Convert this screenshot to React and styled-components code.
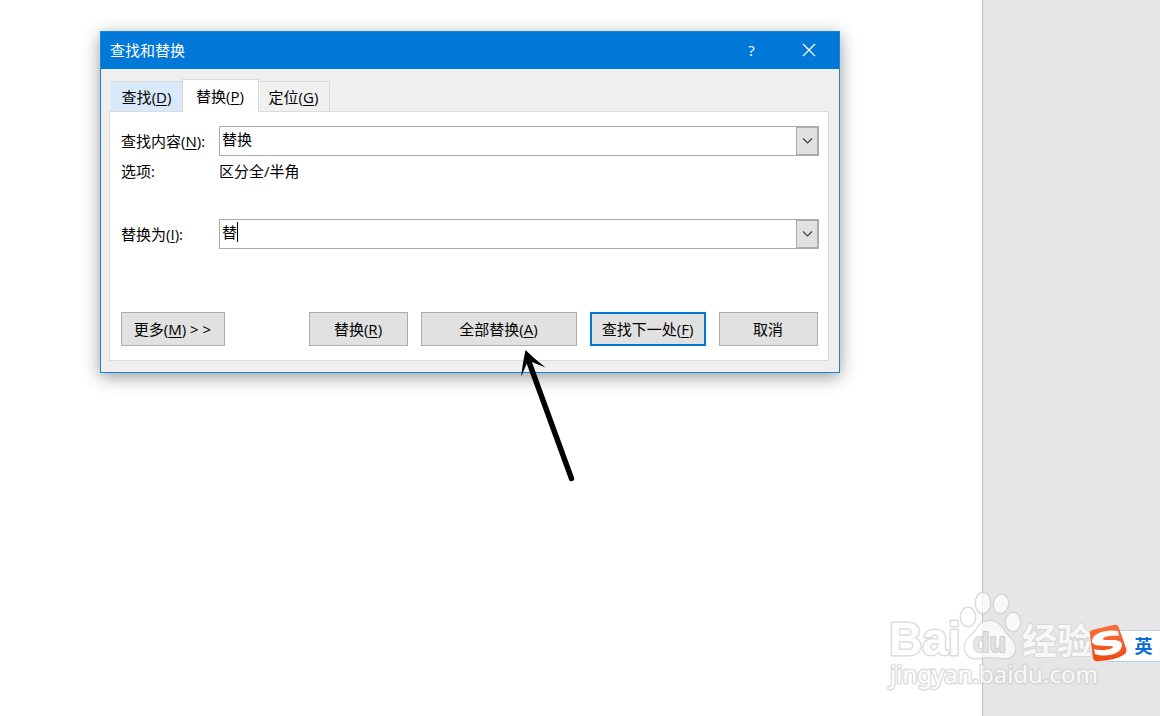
import styled, {createGlobalStyle} from 'styled-components';

import {useState} from 'react';

const GlobalStyle = createGlobalStyle`
    * {
        box-sizing: border-box;
    }

    body {
        margin: 0;
        background: #ffffff;
        color: #000000;
        font-family: "Open Sans", "Noto Sans CJK SC", sans-serif;
        font-size: 15px;
        line-height: 20px;
    }

    button, input {
        font: inherit;
        color: inherit;
        border-radius: 0;
        margin: 0;
    }
`;

const Desktop = styled.div`
    position: relative;
    display: flex;
    min-height: 100vh;
    overflow: hidden;
`;

const DocumentArea = styled.main`
    position: relative;
    flex: 1;
    padding: 31px 142px 31px 100px;
`;

const SidePane = styled.aside`
    width: 178px;
    flex-shrink: 0;
    background: #e6e6e6;
    border-left: 1px solid #bfbfbf;
`;

const Dialog = styled.section`
    background: #efefef;
    border: 1px solid #1883d7;
    box-shadow: 0 4px 16px rgba(0, 0, 0, 0.4);
`;

const TitleBar = styled.header`
    display: flex;
    align-items: center;
    height: 37px;
    padding: 0 2px 2px 9px;
    background: #0078d7;
    color: #ffffff;
`;

const Title = styled.h1`
    flex: 1;
    margin: 0;
    font-size: 15px;
    font-weight: 400;
`;

const TitleButton = styled.button`
    display: flex;
    align-items: center;
    justify-content: center;
    width: 57px;
    height: 35px;
    padding: 0;
    border: none;
    background: transparent;
`;

const DialogBody = styled.div`
    padding: 10px 10px 11px 8px;
`;

const TabList = styled.div`
    display: flex;
    align-items: flex-end;
    height: 32px;
    padding-left: 2px;
`;

const Tab = styled.button`
    position: relative;
    height: ${({$active}) => ($active ? '33px' : '30px')};
    width: ${({$active}) => ($active ? '77px' : '72px')};
    margin-bottom: ${({$active}) => ($active ? '-1px' : '0')};
    margin-right: -1px;
    padding: ${({$active}) => ($active ? '0 1px 1px 0' : '0 1px 0 0')};
    border: 1px solid #d9d9d9;
    border-bottom: none;
    background: ${({$active, $hot}) => ($active ? '#ffffff' : $hot ? '#d8e9f9' : '#f0f0f0')};
    z-index: ${({$active}) => ($active ? 1 : 0)};

    &:first-child {
        border-left-color: transparent;
    }
`;

const Panel = styled.form`
    padding: 14px 9px 14px 11px;
    background: #ffffff;
    border: 1px solid #dcdcdc;
`;

const Row = styled.div`
    display: flex;
    align-items: center;
    margin-bottom: ${({$gap}) => $gap};
`;

const RowLabel = styled.label`
    width: 98px;
    flex-shrink: 0;
    white-space: nowrap;
`;

const Key = styled.u`
    text-decoration-skip-ink: none;
    text-underline-offset: 2px;
`;

const Combo = styled.div`
    position: relative;
    display: flex;
    flex: 1;
    height: 30px;
    border: 1px solid #ababab;
    background: #ffffff;
`;

const ComboInput = styled.input`
    flex: 1;
    min-width: 0;
    padding: 0 2px 4px;
    border: none;
    outline: none;
    background: transparent;
`;

const ComboButton = styled.button`
    display: flex;
    align-items: center;
    justify-content: center;
    width: 22px;
    padding: 0;
    border: 1px solid #adadad;
    background: #e1e1e1;
`;

const Caret = styled.span`
    position: absolute;
    left: 17px;
    top: 2px;
    width: 1px;
    height: 20px;
    background: #000000;
`;

const Actions = styled.div`
    display: flex;
    gap: 13px;
    padding-right: 1px;
`;

const ActionButton = styled.button`
    width: ${({$width}) => $width || '99px'};
    height: 34px;
    padding: 0 1px 0 0;
    white-space: nowrap;
    background: #e1e1e1;
    border: ${({$primary}) => ($primary ? '2px solid #0078d7' : '1px solid #adadad')};

    &:first-child {
        margin-right: auto;
    }
`;

const Pointer = styled.svg`
    position: absolute;
    left: 515px;
    top: 345px;
    pointer-events: none;
`;

const Watermark = styled.svg`
    position: absolute;
    right: 55px;
    bottom: 18px;
    pointer-events: none;
`;

const InputMethod = styled.div`
    position: absolute;
    right: 0;
    bottom: 54px;
    display: flex;
    align-items: flex-end;
`;

const LanguageButton = styled.button`
    width: 53px;
    height: 32px;
    margin-left: -20px;
    padding: 0 0 0 20px;
    background: #ffffff;
    border: 1px solid #b4cfe9;
    border-width: 1px 0;
    color: #0a6fd0;
    font-size: 18px;
    font-weight: 700;
`;

const SogouLogo = styled.svg`
    position: relative;
    z-index: 1;
`;

function ComboBox({id, value, onChange, caret}){
    return(
        <Combo>
            <ComboInput id={id} value={value} onChange={(e) => onChange(e.target.value)} />
            {caret && <Caret />}
            <ComboButton type="button" aria-label="展开列表">
                <svg width="12" height="8" viewBox="0 0 12 8" fill="none" stroke="#404040" strokeWidth="1.2">
                    <path d="M2 1.5 L6.5 6 L11 1.5" />
                </svg>
            </ComboButton>
        </Combo>
    )
}

const tabs = [
    {id: 'find', text: '查找', hotkey: 'D'},
    {id: 'replace', text: '替换', hotkey: 'P'},
    {id: 'goto', text: '定位', hotkey: 'G'}
];

function FindReplaceDialog(){
    const [tab, setTab] = useState('replace');
    const [findText, setFindText] = useState('替换');
    const [replaceText, setReplaceText] = useState('替');

    return(
        <Dialog role="dialog" aria-labelledby="dialogTitle">
            <TitleBar>
                <Title id="dialogTitle">查找和替换</Title>
                <TitleButton type="button">?</TitleButton>
                <TitleButton type="button" aria-label="关闭">
                    <svg width="14" height="14" viewBox="0 0 14 14" stroke="#ffffff" strokeWidth="1.3">
                        <path d="M1 1 L13 13 M13 1 L1 13" />
                    </svg>
                </TitleButton>
            </TitleBar>
            <DialogBody>
                <TabList role="tablist">
                    {tabs.map(({id, text, hotkey}) => (
                        <Tab
                            key={id}
                            type="button"
                            role="tab"
                            aria-selected={tab === id}
                            $active={tab === id}
                            $hot={id === 'find'}
                            onClick={() => setTab(id)}
                        >
                            {text}(<Key>{hotkey}</Key>)
                        </Tab>
                    ))}
                </TabList>
                <Panel onSubmit={(e) => e.preventDefault()}>
                    <Row $gap="5px">
                        <RowLabel htmlFor="findText">查找内容(<Key>N</Key>):</RowLabel>
                        <ComboBox id="findText" value={findText} onChange={setFindText} />
                    </Row>
                    <Row $gap="38px">
                        <RowLabel as="span">选项:</RowLabel>
                        <span>区分全/半角</span>
                    </Row>
                    <Row $gap="63px">
                        <RowLabel htmlFor="replaceText">替换为(<Key>I</Key>):</RowLabel>
                        <ComboBox id="replaceText" value={replaceText} onChange={setReplaceText} caret />
                    </Row>
                    <Actions>
                        <ActionButton type="button" $width="104px">更多(<Key>M</Key>) &gt; &gt;</ActionButton>
                        <ActionButton type="button">替换(<Key>R</Key>)</ActionButton>
                        <ActionButton type="button" $width="156px">全部替换(<Key>A</Key>)</ActionButton>
                        <ActionButton type="submit" $width="116px" $primary>查找下一处(<Key>F</Key>)</ActionButton>
                        <ActionButton type="button">取消</ActionButton>
                    </Actions>
                </Panel>
            </DialogBody>
        </Dialog>
    )
}

function BaiduWatermark(){
    return(
        <Watermark width="220" height="110" viewBox="0 0 220 110" aria-hidden="true">
            <g
                opacity="0.75"
                fill="#ffffff"
                stroke="#d2d2d2"
                strokeWidth="3"
                strokeLinejoin="round"
                paintOrder="stroke"
                fontFamily='"Noto Sans", "Noto Sans CJK SC", sans-serif'
            >
                <text x="4" y="67" fontSize="46" fontWeight="700" fontFamily='"Liberation Sans", Arial, sans-serif'>Bai</text>
                <ellipse cx="83" cy="29" rx="7" ry="9" />
                <ellipse cx="98" cy="15" rx="7" ry="10" />
                <ellipse cx="116" cy="16" rx="7" ry="9" transform="rotate(12 116 16)" />
                <ellipse cx="128" cy="34" rx="7" ry="9" />
                <path d="M105 33 C112 33 116 38 119 43 C123 49 130 53 130 60 C130 66 126 70 120 70 C114 70 111 69 105 69 C99 69 96 70 90 70 C83 70 80 64 80 58 C80 51 87 48 91 43 C94 37 98 33 105 33 Z" />
                <text x="88" y="64" fontSize="27" fontWeight="700" fill="#e0e0e0" stroke="#c6c6c6" strokeWidth="2" fontFamily='"Liberation Sans", Arial, sans-serif'>du</text>
                <text x="137" y="66" fontSize="35" fontWeight="700" strokeWidth="2">经验</text>
                <text x="5" y="95" fontSize="24" fontWeight="400" strokeWidth="3">jingyan.baidu.com</text>
            </g>
        </Watermark>
    )
}

function InputMethodBar(){
    return(
        <InputMethod>
            <SogouLogo width="38" height="38" viewBox="0 0 38 38" aria-hidden="true">
                <defs>
                    <linearGradient id="sogouFill" x1="0" y1="0" x2="0" y2="1">
                        <stop offset="0" stopColor="#fb7140" />
                        <stop offset="1" stopColor="#ee4a10" />
                    </linearGradient>
                </defs>
                <path d="M3 6 Q14 3 25 1 Q29 0 30 4 L37 24 Q38 28 36 30 Q28 36 10 37 Q5 38 4 34 L1 10 Q0 7 3 6 Z" fill="url(#sogouFill)" />
                <path d="M29 7 L30 12 C24 11 14 12 14 15 C14 18 33 13 33 21 C33 30 17 34 6 30 L5 25 C12 27 23 26 24 23 C25 20 3 25 3 17 C3 9 18 5 29 7 Z" fill="#ffffff" />
            </SogouLogo>
            <LanguageButton type="button">英</LanguageButton>
        </InputMethod>
    )
}

function App(){
    return(
        <>
            <GlobalStyle />
            <Desktop>
                <DocumentArea>
                    <FindReplaceDialog />
                    <Pointer width="62" height="140" viewBox="0 0 62 140" aria-hidden="true">
                        <path d="M10.5 5 L19 13 L30.5 22.5 L17 17 L12 18 L6 32 L8 18 Z" />
                        <path d="M14 17 L56.5 133.5" stroke="#000000" strokeWidth="5.4" strokeLinecap="round" />
                    </Pointer>
                </DocumentArea>
                <SidePane />
                <BaiduWatermark />
                <InputMethodBar />
            </Desktop>
        </>
    )
}

export default App;
